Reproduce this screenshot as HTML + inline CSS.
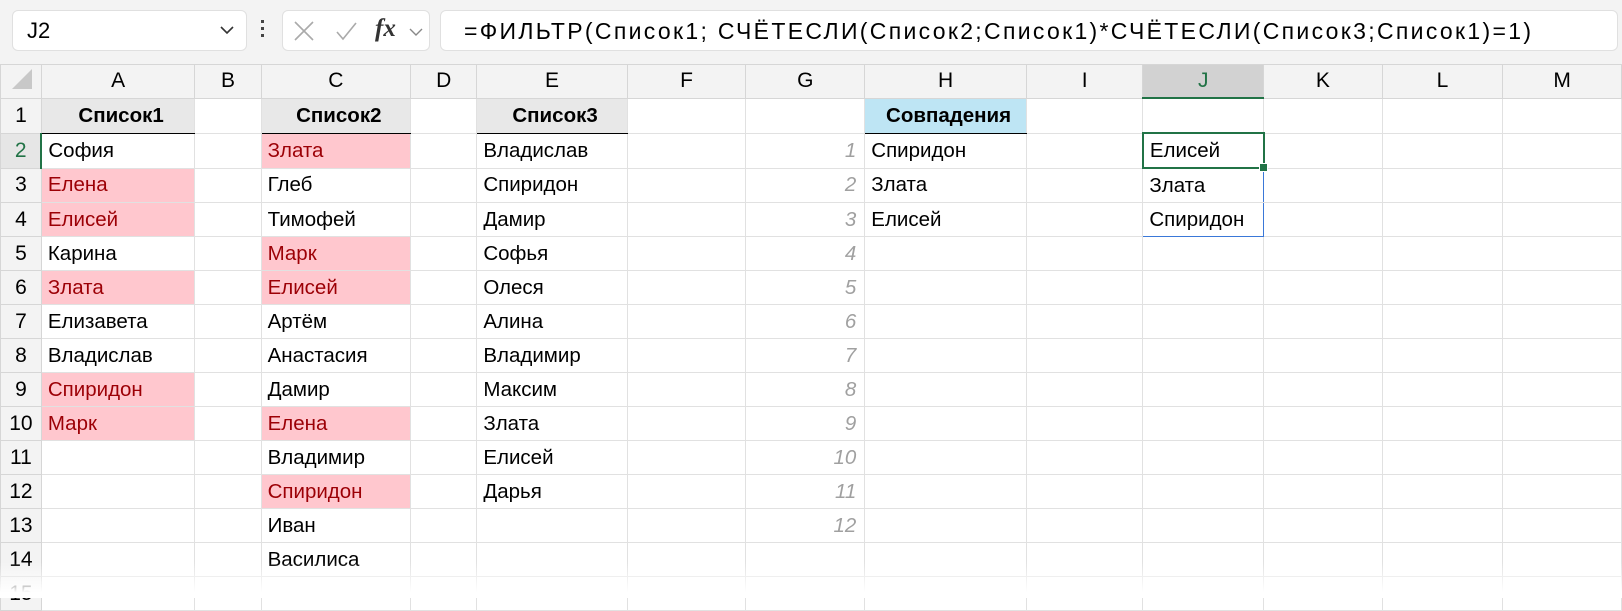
<!DOCTYPE html>
<html><head><meta charset="utf-8"><style>
body{margin:0;width:1622px;height:598px;overflow:hidden;background:#fff;font-family:"Liberation Sans","DejaVu Sans",sans-serif;position:relative}
.tb{position:absolute;left:0;top:0;width:1622px;height:64px;background:#f3f3f3}
.box{position:absolute;background:#fff;border:1px solid #e0e0e0;border-radius:6px;top:10px;height:39px}
table{position:absolute;left:0;top:64px;border-collapse:collapse;table-layout:fixed}
td{height:33px;border:1px solid #e1e1e1;padding:0 0 0 6px;font-size:20.5px;white-space:nowrap;overflow:visible;color:#000}
tr.h td{height:32px;background:#f3f3f3;text-align:center;padding:0;font-size:21px;border-color:#d6d6d6}
td.r{background:#f3f3f3;text-align:center;padding:0;border-color:#d6d6d6;font-size:21px}
.hd{font-weight:bold;text-align:center;background:#e8e8e8;border-bottom:1.5px solid #000}
.p{background:#ffc7ce;color:#9c0006}
.n{text-align:right;font-style:italic;color:#a0a0a0;padding-right:8px}
.fade{position:absolute;left:0;top:562px;width:1622px;height:36px;background:linear-gradient(rgba(255,255,255,0),#fff 85%)}
</style></head><body>
<div class="tb">
<div class="box" style="left:12px;width:233px"><span style="position:absolute;left:14px;top:7px;font-size:22px">J2</span>
<svg style="position:absolute;right:12px;top:14px" width="14" height="10"><path d="M1 2l6 6 6-6" stroke="#333" stroke-width="1.6" fill="none"/></svg></div>
<div style="position:absolute;left:261px;top:20px;width:4px;height:20px"><div style="width:3px;height:3px;background:#444;margin-bottom:4px"></div><div style="width:3px;height:3px;background:#444;margin-bottom:4px"></div><div style="width:3px;height:3px;background:#444"></div></div>
<div class="box" style="left:282px;width:146px">
<svg style="position:absolute;left:10px;top:9px" width="120" height="22"><path d="M2 2l18 18M20 2L2 20" stroke="#aaa" stroke-width="1.6"/><path d="M44 12l6 7 13-16" stroke="#aaa" stroke-width="1.6" fill="none"/></svg>
<span style="position:absolute;left:92px;top:4px;font-family:'Liberation Serif',serif;font-style:italic;font-weight:bold;font-size:25px;color:#333">fx</span>
<svg style="position:absolute;left:126px;top:16px" width="14" height="10"><path d="M1 2l6 6 6-6" stroke="#888" stroke-width="1.4" fill="none"/></svg></div>
<div class="box" style="left:440px;width:1176px">
<svg style="position:absolute;left:22px;top:0" width="1100" height="39"><text x="1" y="28" font-family="Liberation Sans, sans-serif" font-size="23" textLength="1067" lengthAdjust="spacing">=ФИЛЬТР(Список1; СЧЁТЕСЛИ(Список2;Список1)*СЧЁТЕСЛИ(Список3;Список1)=1)</text></svg></div>
</div>
<table>
<colgroup><col style="width:41px"><col style="width:154px"><col style="width:67px"><col style="width:150px"><col style="width:67px"><col style="width:151px"><col style="width:120px"><col style="width:120px"><col style="width:162px"><col style="width:118px"><col style="width:121px"><col style="width:120px"><col style="width:122px"><col style="width:120px"></colgroup>
<tr class="h"><td><svg width="30" height="26"><path d="M26 4V24H6Z" fill="#c8c8c8"/></svg></td><td>A</td><td>B</td><td>C</td><td>D</td><td>E</td><td>F</td><td>G</td><td>H</td><td>I</td><td style="background:#d2d2d2;border-bottom:2px solid #217346;color:#217346">J</td><td>K</td><td>L</td><td>M</td></tr>
<tr><td class="r">1</td><td class="hd">Список1</td><td></td><td class="hd">Список2</td><td></td><td class="hd">Список3</td><td></td><td></td><td class="hd" style="background:#bee5f4">Совпадения</td><td></td><td></td><td></td><td></td><td></td></tr>
<tr><td class="r" style="color:#217346;background:#e6e6e6;border-right:2px solid #217346">2</td><td>София</td><td></td><td class="p">Злата</td><td></td><td>Владислав</td><td></td><td class="n">1</td><td>Спиридон</td><td></td><td style="border:2px solid #217346;position:relative">Елисей<div style="position:absolute;right:-5px;bottom:-5px;width:7px;height:7px;background:#217346;border:1px solid #fff"></div></td><td></td><td></td><td></td></tr>
<tr><td class="r">3</td><td class="p">Елена</td><td></td><td>Глеб</td><td></td><td>Спиридон</td><td></td><td class="n">2</td><td>Злата</td><td></td><td style="border-left:1.5px solid #3a78d8;border-right:1.5px solid #3a78d8">Злата</td><td></td><td></td><td></td></tr>
<tr><td class="r">4</td><td class="p">Елисей</td><td></td><td>Тимофей</td><td></td><td>Дамир</td><td></td><td class="n">3</td><td>Елисей</td><td></td><td style="border:1.5px solid #3a78d8;border-top:none">Спиридон</td><td></td><td></td><td></td></tr>
<tr><td class="r">5</td><td>Карина</td><td></td><td class="p">Марк</td><td></td><td>Софья</td><td></td><td class="n">4</td><td></td><td></td><td></td><td></td><td></td><td></td></tr>
<tr><td class="r">6</td><td class="p">Злата</td><td></td><td class="p">Елисей</td><td></td><td>Олеся</td><td></td><td class="n">5</td><td></td><td></td><td></td><td></td><td></td><td></td></tr>
<tr><td class="r">7</td><td>Елизавета</td><td></td><td>Артём</td><td></td><td>Алина</td><td></td><td class="n">6</td><td></td><td></td><td></td><td></td><td></td><td></td></tr>
<tr><td class="r">8</td><td>Владислав</td><td></td><td>Анастасия</td><td></td><td>Владимир</td><td></td><td class="n">7</td><td></td><td></td><td></td><td></td><td></td><td></td></tr>
<tr><td class="r">9</td><td class="p">Спиридон</td><td></td><td>Дамир</td><td></td><td>Максим</td><td></td><td class="n">8</td><td></td><td></td><td></td><td></td><td></td><td></td></tr>
<tr><td class="r">10</td><td class="p">Марк</td><td></td><td class="p">Елена</td><td></td><td>Злата</td><td></td><td class="n">9</td><td></td><td></td><td></td><td></td><td></td><td></td></tr>
<tr><td class="r">11</td><td></td><td></td><td>Владимир</td><td></td><td>Елисей</td><td></td><td class="n">10</td><td></td><td></td><td></td><td></td><td></td><td></td></tr>
<tr><td class="r">12</td><td></td><td></td><td class="p">Спиридон</td><td></td><td>Дарья</td><td></td><td class="n">11</td><td></td><td></td><td></td><td></td><td></td><td></td></tr>
<tr><td class="r">13</td><td></td><td></td><td>Иван</td><td></td><td></td><td></td><td class="n">12</td><td></td><td></td><td></td><td></td><td></td><td></td></tr>
<tr><td class="r">14</td><td></td><td></td><td>Василиса</td><td></td><td></td><td></td><td></td><td></td><td></td><td></td><td></td><td></td><td></td></tr>
<tr><td class="r">15</td><td></td><td></td><td></td><td></td><td></td><td></td><td></td><td></td><td></td><td></td><td></td><td></td><td></td></tr>
</table>
<div class="fade"></div>
</body></html>
